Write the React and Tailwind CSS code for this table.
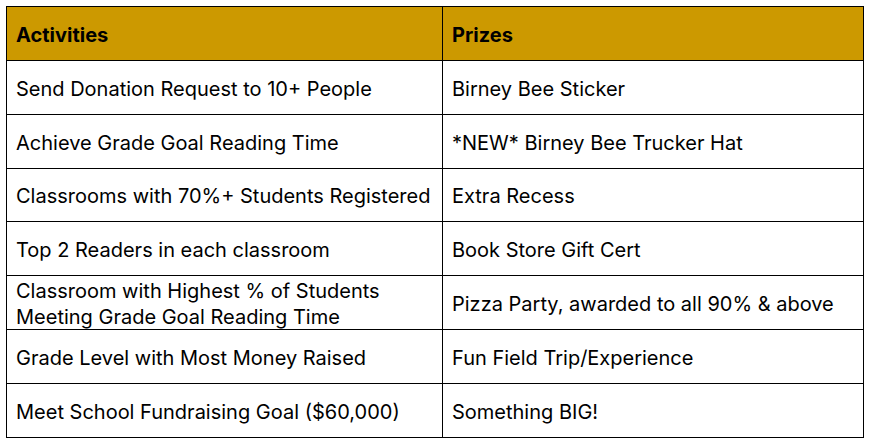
import React from 'react';

const rows = [
  ['Send Donation Request to 10+ People', 'Birney Bee Sticker'],
  ['Achieve Grade Goal Reading Time', '*NEW* Birney Bee Trucker Hat'],
  ['Classrooms with 70%+ Students Registered', 'Extra Recess', 'h-[53px]'],
  ['Top 2 Readers in each classroom', 'Book Store Gift Cert'],
  ['Classroom with Highest % of Students Meeting Grade Goal Reading Time', 'Pizza Party, awarded to all 90% & above'],
  ['Grade Level with Most Money Raised', 'Fun Field Trip/Experience'],
  ['Meet School Fundraising Goal ($60,000)', 'Something BIG!'],
];

const Cell = ({ children, head, h = 'h-[54px]' }) => (
  <div
    className={`box-border ${h} border-r border-b border-black flex items-center pl-[9px] pr-2 pt-[2px] leading-[26px] ${
      head ? 'bg-[#cc9900] font-bold' : 'bg-white'
    }`}
  >
    {children}
  </div>
);

export default function App() {
  return (
    <div className="w-[869px] h-[443px] bg-white pt-[6px] pl-[6px]">
      <div
        className="grid grid-cols-[436px_421px] w-[858px] border-l border-t border-black text-black text-[20px]"
        style={{ fontFamily: 'Inter, "Noto Sans", sans-serif' }}
      >
        <Cell head>Activities</Cell>
        <Cell head>Prizes</Cell>
        {rows.map(([a, p, h]) => (
          <React.Fragment key={a}>
            <Cell h={h}>{a}</Cell>
            <Cell h={h}>{p}</Cell>
          </React.Fragment>
        ))}
      </div>
    </div>
  );
}
